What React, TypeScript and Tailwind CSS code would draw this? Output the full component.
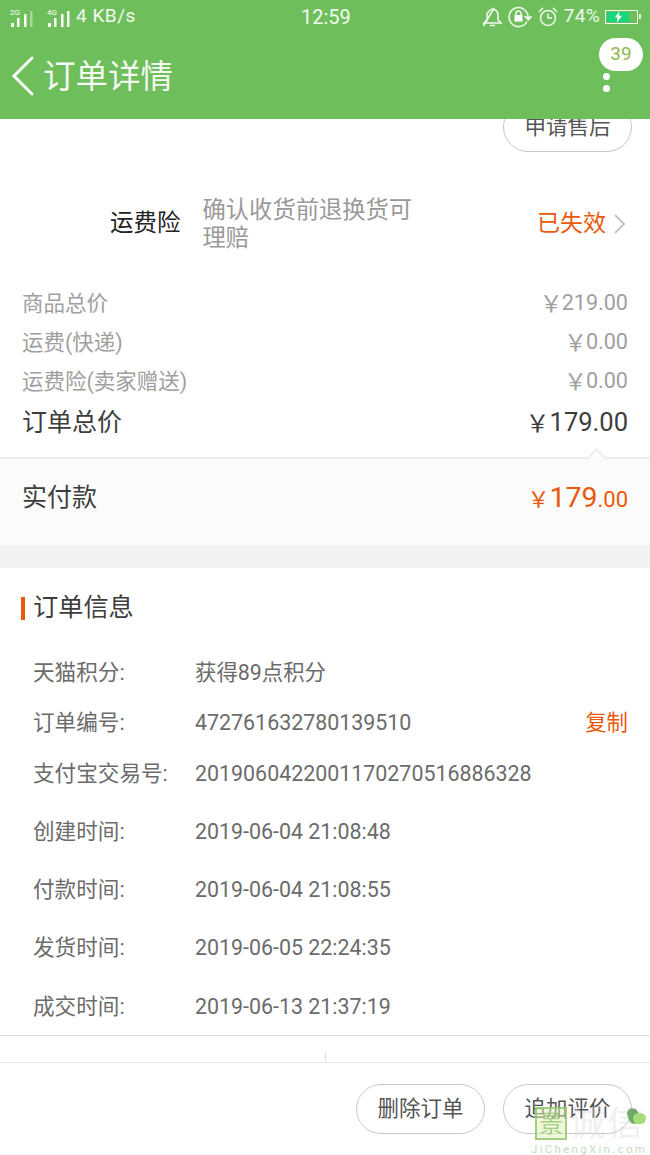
const font = { fontFamily: '"Roboto", "Noto Sans CJK SC", sans-serif' };
const cjk = { fontFamily: '"Noto Sans CJK SC", sans-serif' };

const priceRows = [
  ["商品总价", "219.00"],
  ["运费(快递)", "0.00"],
  ["运费险(卖家赠送)", "0.00"],
];

const infoRows = [
  { label: "天猫积分:", value: "获得89点积分", cls: "h-[50px]" },
  { label: "订单编号:", value: "472761632780139510", cls: "h-[51px]", copy: true },
  { label: "支付宝交易号:", value: "2019060422001170270516886328", cls: "h-[51px]" },
  { label: "创建时间:", value: "2019-06-04 21:08:48", cls: "h-[58px] mt-[3px]" },
  { label: "付款时间:", value: "2019-06-04 21:08:55", cls: "h-[58px]" },
  { label: "发货时间:", value: "2019-06-05 22:24:35", cls: "h-[59px]" },
  { label: "成交时间:", value: "2019-06-13 21:37:19", cls: "h-[58px]" },
];

function Signal({ label, faint }: { label: string; faint?: boolean }) {
  return (
    <svg width="37" height="26" viewBox="0 0 37 26" fill="none">
      <text x="1" y="11" fontSize="8" fill="#fff" fontFamily="Roboto">{label}</text>
      <rect x="2" y="19" width="3" height="4" fill="#fff" />
      <rect x="8" y="14" width="2.500" height="9" fill="#fff" />
      <rect x="15" y="10" width="2.500" height="13" fill="#fff" />
      <rect x="21" y="7" width="2.500" height="16" fill="#fff" fillOpacity={faint ? 0.4 : 0.9} />
    </svg>
  );
}

function StatusBar() {
  return (
    <div className="h-[33px] flex items-center justify-between pl-[9px] pr-[9px] text-white/90">
      <div className="w-[200px] flex items-center">
        <Signal label="2G" faint />
        <Signal label="4G" />
        <span className="text-[19px] tracking-[0.5px] -ml-[7px]">4 KB/s</span>
      </div>
      <span className="text-[20px] -ml-[39px]">12:59</span>
      <div className="flex items-center gap-[5px]">
        <svg width="21" height="22" viewBox="0 0 21 22" fill="none" stroke="#fff" strokeOpacity="0.9" strokeWidth="1.500">
          <path d="M2 17h17l-3-3V9a5.500 5.500 0 0 0-8-5L5 7.500V14z" />
          <path d="M8 19.500h5" />
          <path d="M1.500 20 12 2" />
        </svg>
        <svg width="24" height="22" viewBox="0 0 24 22" fill="none" stroke="#fff" strokeOpacity="0.9" strokeWidth="1.500">
          <path d="M19 15.500A9.500 9.500 0 1 1 20 10" />
          <path d="m17.500 11 5.500 0-2.700 3z" fill="#fff" />
          <rect x="6.500" y="9" width="8" height="6.500" fill="#fff" stroke="none" />
          <path d="M8 9V7.500a2.500 2.500 0 0 1 5 0V9" />
        </svg>
        <svg width="22" height="22" viewBox="0 0 22 22" fill="none" stroke="#fff" strokeOpacity="0.9" strokeWidth="1.500">
          <circle cx="11" cy="12" r="7.500" />
          <path d="M11 7.500V12h4M2 6l4-4M20 6l-4-4" />
        </svg>
        <span className="text-[19px] tracking-[0.3px]">74%</span>
        <div className="flex items-center">
          <div className="w-[33px] h-[14px] border border-white/90 flex p-px">
            <div className="w-[22px] h-full bg-[#17d67b] flex items-center justify-center">
              <svg width="9" height="12" viewBox="0 0 10 13"><path d="M6 0 1 7h3l-1 6 6-8H5.500z" fill="#fff" /></svg>
            </div>
          </div>
          <div className="w-[2px] h-[5px] bg-white/80 ml-px" />
        </div>
      </div>
    </div>
  );
}

function TitleBar() {
  return (
    <div className="h-[86px] relative flex items-start pl-[11px] pt-[23px]">
      <svg width="24" height="40" viewBox="0 0 24 40" fill="none" stroke="#fff" strokeOpacity="0.95" strokeWidth="3" strokeLinecap="round">
        <path d="M21 2 3 20l18 18" />
      </svg>
      <span className="ml-[8px] mt-px text-[32.500px] leading-[40px] text-white/95">订单详情</span>
      <div className="absolute right-[7px] top-[5px] w-[44px] h-[33px] rounded-full bg-white flex items-center justify-center text-[19px] text-[#8db84f]">39</div>
      <div className="absolute right-[40px] top-[40px] w-[7px] h-[7px] rounded-full bg-white" />
      <div className="absolute right-[40px] top-[52px] w-[7px] h-[7px] rounded-full bg-white" />
    </div>
  );
}

function Pill({ children }: { children: string }) {
  return (
    <div className="w-[129px] h-[50px] rounded-full border border-[#c8c8c8] flex items-center justify-center text-[21.500px] text-[#555] bg-white">
      {children}
    </div>
  );
}

function Yen({ cls }: { cls: string }) {
  return <span style={cjk} className={cls}>{"\uFFE5"}</span>;
}

export default function App() {
  return (
    <div style={font} className="w-[650px] h-[1155px] relative overflow-hidden bg-white flex flex-col">
      <header className="bg-[#6fbe5c] shrink-0 relative z-10">
        <StatusBar />
        <TitleBar />
      </header>

      <main className="flex-1 overflow-hidden">
        <div className="flex justify-end pr-[18px] -mt-[17px]">
          <Pill>申请售后</Pill>
        </div>

        <div className="h-[56px] mt-[44px] flex items-center pr-[24px]">
          <span className="ml-[110px] text-[23.500px] text-[#222]">运费险</span>
          <span className="ml-[22px] w-[225px] text-[23.300px] leading-[28px] text-[#999]">确认收货前退换货可理赔</span>
          <span className="ml-auto text-[23px] text-[#e8590c]">已失效</span>
          <svg width="14" height="22" viewBox="0 0 14 22" fill="none" stroke="#c4c4c4" strokeWidth="2" className="ml-[7px] -mr-px">
            <path d="m2 2 9 9-9 9" />
          </svg>
        </div>

        <div className="mt-[33px] px-[22px]">
          {priceRows.map(([label, value]) => (
            <div key={label} className="h-[39px] flex items-center justify-between text-[#a0a0a0]">
              <span className="text-[21.500px]">{label}</span>
              <span className="text-[21.600px] leading-[30px] flex items-center -mt-[4px]"><Yen cls="text-[23px] leading-none -mr-px" />{value}</span>
            </div>
          ))}
          <div className="h-[42px] flex items-center justify-between text-[#3d3d3d]">
            <span className="text-[25px]">订单总价</span>
            <span className="text-[25.500px] leading-[34px] flex items-center -mt-[3px]"><Yen cls="text-[24px] leading-none" />179.00</span>
          </div>
        </div>

        <div className="relative h-[88px] mt-[13px] border-t-2 border-[#eeeeee] bg-[#fbfbfb] px-[22px] pb-[8px] flex items-center justify-between">
          <div className="absolute right-[46px] -top-[8px] w-[15px] h-[15px] rotate-45 border-l-2 border-t-2 border-[#eeeeee] bg-[#fbfbfb]" />
          <span className="text-[25px] text-[#3d3d3d]">实付款</span>
          <span className="text-[#e8590c] flex items-baseline">
            <Yen cls="text-[22px] leading-none" />
            <span className="text-[28.500px]">179</span>
            <span className="text-[22px]">.00</span>
          </span>
        </div>

        <div className="h-[23px] bg-[#f2f2f2]" />

        <div className="h-[78px] mt-px flex items-center pl-[21px]">
          <div className="w-[4px] h-[23px] bg-[#e8590c]" />
          <span className="ml-[8px] text-[25.200px] text-[#3d3d3d]">订单信息</span>
        </div>

        <div className="mt-px">
          {infoRows.map((row) => (
            <div key={row.label} className={`${row.cls} flex items-center pl-[33px] pr-[22px] text-[21.400px] text-[#6b6b6b]`}>
              <span className="w-[162px] shrink-0 text-[21.600px]">{row.label}</span>
              <span>{row.value}</span>
              {row.copy && <span className="ml-auto text-[#e8590c]">复制</span>}
            </div>
          ))}
        </div>

        <div className="-mt-px h-[27px] border-t border-[#dddddd] flex justify-center items-end">
          <div className="w-px h-[9px] bg-[#dddddd]" />
        </div>
        <div className="h-px bg-[#e6e6e6]" />
      </main>

      <footer className="h-[92px] shrink-0 flex justify-end gap-[18px] pr-[18px] pt-[21px] bg-white">
        <Pill>删除订单</Pill>
        <Pill>追加评价</Pill>
      </footer>

      <div className="absolute left-[531px] top-[1107px] w-[119px] h-[48px] overflow-hidden pointer-events-none">
        <div className="flex items-start h-[35px]">
          <div className="ml-[4px] w-[32px] h-[33px] bg-[#dff2b8]/50 border-2 border-[#8fc56d]/80 text-[#8fc56d]/80 flex items-center justify-center text-[24px] leading-none">景</div>
          <span className="ml-[2px] text-[36px] leading-[35px] text-[#d8d8d8]/40 tracking-[2px] whitespace-nowrap">诚信</span>
        </div>
        <div className="text-[11.500px] leading-[14px] tracking-[2.300px] text-[#c5dcc0] whitespace-nowrap">JiChengXin.com</div>
        <div className="absolute left-[97px] top-[1px] w-[11px] h-[16px] rounded-full bg-[#6fa868] rotate-[-20deg]" />
        <div className="absolute left-[102px] top-[6px] w-[13px] h-[11px] rounded-full bg-[#a6dc7a]" />
      </div>
    </div>
  );
}
